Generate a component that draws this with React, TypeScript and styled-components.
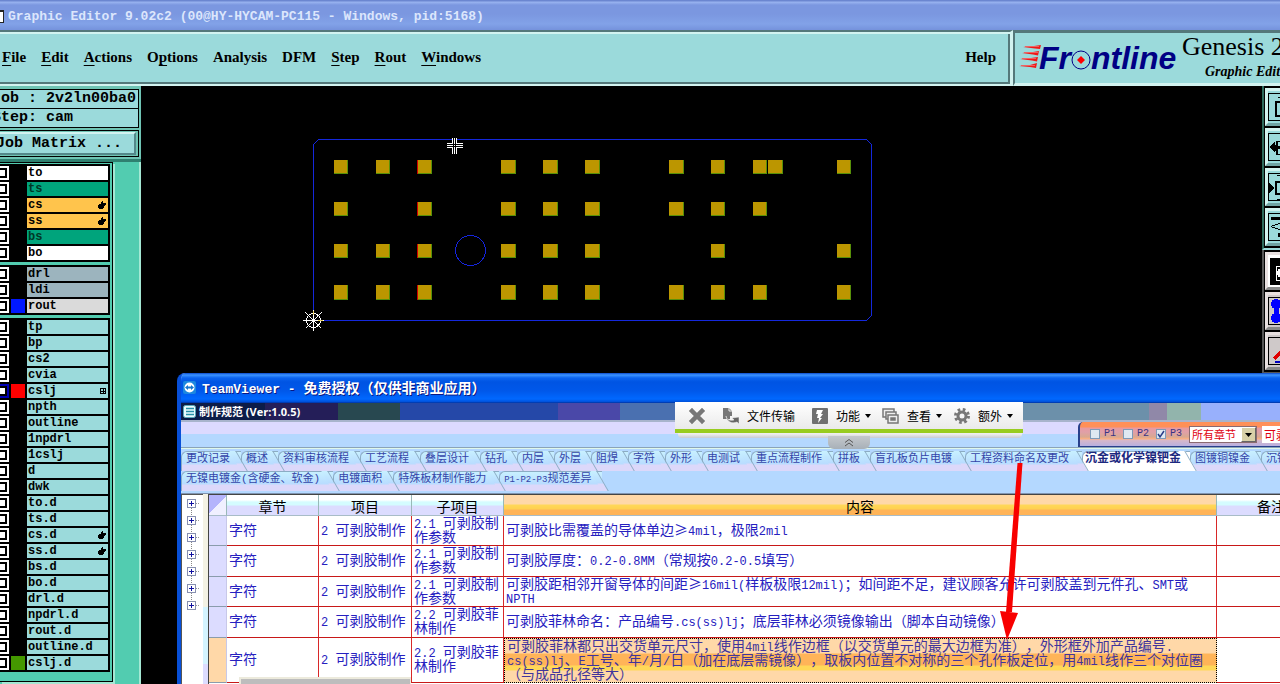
import React from 'react';
import styled, { createGlobalStyle, css } from 'styled-components';

const mono = '"Liberation Mono", "Noto Sans CJK SC", monospace';
const serif = '"Liberation Serif", "Noto Sans CJK SC", serif';
const cjk = '"Noto Sans CJK SC", sans-serif';
const aqua = '#9bdadb';
const teal = '#52ccb0';

const GlobalStyle = createGlobalStyle`
  *, *::before, *::after { box-sizing: border-box; }
  body { margin: 0; background: #000; overflow: hidden; }
  button, input, select { font: inherit; color: inherit; margin: 0; padding: 0; border-radius: 0; }
  button { background: none; border: 0; }
`;

const Screen = styled.div`
  position: relative;
  display: flex;
  flex-direction: column;
  height: 100vh;
  overflow: hidden;
  background: #000;
`;

/* ---------- title and menu ---------- */

const TitleBar = styled.header`
  display: flex;
  align-items: center;
  gap: 4px;
  height: 30px;
  flex: none;
  padding-top: 3px;
  background: linear-gradient(#6b86d0 0, #6b86d0 1px, #9ab4f0 2px, #7b97e0 5px, #7b97e0 14px, #82a2e8 24px, #7592dc 30px);
  color: #dce6fc;
  font: bold 13px/16px ${mono};
  white-space: pre;
`;

const TitleIcon = styled.span`
  width: 4px;
  height: 13px;
  background: #fff;
  border: solid #222;
  border-width: 2px 1px 1px 0;
`;

const TopRow = styled.div`
  display: flex;
  height: 56px;
  flex: none;
  background: ${aqua};
`;

const MenuBar = styled.nav`
  display: flex;
  align-items: center;
  gap: 15px;
  flex: 1;
  padding: 0 14px 2px 2px;
  border-top: 2px solid #54787a;
  border-bottom: 2px solid #d2f3f0;
  border-right: 3px solid #d2f3f0;
  box-shadow: inset 0 2px #d2f3f0, inset -2px -2px #54787a;
  font: bold 15px/20px ${serif};
  color: #000;
`;

const MenuItem = styled.button<{ $end?: boolean }>`
  white-space: nowrap;
  ${p => p.$end && css`margin-left: auto;`}
  u {
    text-decoration-thickness: 1px;
    text-underline-offset: 3px;
  }
`;

const Brand = styled.div`
  display: flex;
  width: 267px;
  flex: none;
  overflow: hidden;
  border-left: 2px solid #54787a;
  border-top: 3px solid #54787a;
  border-bottom: 3px solid #d2f3f0;
`;

const Logo = styled.svg`
  width: 164px;
  height: 50px;
  flex: none;
  margin-left: 3px;
`;

const BrandText = styled.div`
  flex: none;
  padding-top: 1px;
  font-family: ${serif};
  color: #000;
  white-space: nowrap;
`;

const Product = styled.div`
  font-size: 26px;
  line-height: 26px;
`;

const ProductSub = styled.div`
  padding-left: 23px;
  font-size: 14px;
  line-height: 24px;
  font-weight: bold;
  font-style: italic;
`;

/* ---------- left sidebar ---------- */

const Workspace = styled.div`
  display: flex;
  flex: 1;
  min-height: 0;
`;

const Sidebar = styled.aside`
  display: flex;
  flex-direction: column;
  width: 141px;
  flex: none;
  overflow: hidden;
  background: ${teal};
  color: #000;
`;

const JobPanel = styled.div`
  flex: none;
  padding: 3px 2px 2px 0;
  background: #6fc4b4;
  border-bottom: 3px solid #2f8070;
  font: bold 15px/18px ${mono};
  white-space: pre;
`;

const JobField = styled.div`
  height: 20px;
  margin-bottom: -1px;
  text-indent: -8px;
  background: ${aqua};
  border: 1px solid #000;
  border-left: 0;
`;

const MatrixFrame = styled.div`
  margin-top: 3px;
  padding: 1px 2px 1px 0;
  border: 1px solid #000;
  border-left: 0;
`;

const MatrixButton = styled.button`
  display: block;
  width: 100%;
  height: 23px;
  text-align: left;
  text-indent: -4px;
  background: ${aqua};
  border: solid;
  border-width: 2px 2px 2px 0;
  border-color: #d2f3f0 #54888a #54888a;
`;

const LayerArea = styled.div`
  display: flex;
  flex: 1;
  min-height: 0;
  border-right: 2px solid #a4e8d4;
`;

const LayerFrame = styled.div`
  display: flex;
  flex-direction: column;
  gap: 3px;
  width: 113px;
  height: 520px;
  padding: 1px 2px 0 0;
  border: solid #000;
  border-width: 1px 1px 1px 0;
  box-shadow: 2px 2px #a4e8d4;
`;

const LayerGroup = styled.ul`
  display: flex;
  flex-direction: column;
  gap: 2px;
  margin: 0;
  padding: 2px 2px 2px 0;
  list-style: none;
  background: #000;
`;

const LayerRow = styled.li`
  display: flex;
  gap: 2px;
  height: 14px;
`;

const LayerCheck = styled.input<{ $work?: boolean }>`
  appearance: none;
  width: 14px;
  height: 14px;
  flex: none;
  margin-left: -5px;
  background: #fff;
  border: 2px solid ${p => (p.$work ? '#0000b4' : '#fff')};
  box-shadow: inset 0 0 0 2px #000;
`;

const Swatch = styled.span<{ $c?: string }>`
  width: 14px;
  flex: none;
  background: ${p => p.$c || '#000'};
`;

const LayerName = styled.label<{ $bg: string; $fg: string }>`
  display: flex;
  justify-content: space-between;
  align-items: center;
  flex: 1;
  padding: 0 2px 0 1px;
  background: ${p => p.$bg};
  color: ${p => p.$fg};
  font: bold 12px/14px ${mono};
`;

const Canvas = styled.main`
  flex: 1;
  min-width: 0;
  svg { display: block; width: 100%; height: 100%; }
`;

/* ---------- right tool rail ---------- */

const Rail = styled.aside`
  display: flex;
  flex-direction: column;
  width: 18px;
  flex: none;
  overflow: hidden;
`;

const RailGroup = styled.div<{ $gray?: boolean }>`
  display: flex;
  flex-direction: column;
  gap: 2px;
  padding: 2px 0 2px 1px;
  width: 44px;
  background: #000;
  border-left: 2px solid ${p => (p.$gray ? '#555' : '#2d6a5c')};
  border-bottom: 2px solid ${p => (p.$gray ? '#555' : aqua)};
`;

const RailButton = styled.button<{ $tone: 'aqua' | 'gray' | 'on' }>`
  width: 38px;
  height: 38px;
  flex: none;
  border: 3px solid;
  border-color: ${p => (p.$tone === 'aqua' ? '#d2f3f0 #54888a #6fa2a2 #d2f3f0' : '#e8e0e0 #777 #888 #e8e0e0')};
  background: ${p => (p.$tone === 'aqua' ? aqua : p.$tone === 'gray' ? '#cfc9c9' : '#fff')};
  svg { display: block; width: 32px; height: 32px; }
`;

/* ---------- TeamViewer window ---------- */

const Window = styled.section`
  position: absolute;
  left: 177px;
  top: 373px;
  right: 0;
  bottom: 0;
  display: flex;
  flex-direction: column;
  overflow: hidden;
  background: #b4d8ff;
  border-left: 4px solid #0850d8;
  border-radius: 8px 0 0 0;
`;

const WindowTitle = styled.header`
  display: flex;
  align-items: center;
  gap: 5px;
  height: 30px;
  flex: none;
  margin-left: -4px;
  padding-left: 6px;
  background: linear-gradient(#0a48c8 0, #3c94ff 2px, #0a62ee 5px, #0054e3 9px, #0058ea 18px, #0068ff 26px, #0050d8 29px, #002a90 30px);
  color: #fff;
  font: bold 13px/18px ${mono};
  text-shadow: 1px 1px #0a1883;
  white-space: pre;
`;

const TitleCjk = styled.span`
  font-family: ${cjk};
  font-size: 14px;
  text-spacing-trim: space-all;
`;

const Caption = styled.div`
  display: flex;
  align-items: center;
  gap: 3px;
  height: 17px;
  flex: none;
  padding-left: 2px;
  color: #fff;
  font: bold 11px/16px "Open Sans", ${cjk};
  background: linear-gradient(90deg, #0c1c48 0, #0c1c48 84px, #241e58 84px, #241e58 157px,
    #284850 157px, #284850 219px, #2548a8 219px, #2548a8 377px, #4a48a8 377px, #4a48a8 439px,
    #4a70b0 439px, #4a70b0 600px, #6c90aa 600px, #6c90aa 968px, #9088a8 968px, #9088a8 986px,
    #92b4ac 986px, #92b4ac 1020px, #98b0fc 1020px);
`;

const FilterBand = styled.div`
  display: flex;
  justify-content: flex-end;
  height: 28px;
  flex: none;
  border-top: 2px solid #a8b4cc;
  border-bottom: 1px solid #8aa4b8;
  background: linear-gradient(#dcdaff 12px, #b4d8ff 12px);
`;

const FilterGroup = styled.form`
  display: flex;
  align-items: center;
  width: 202px;
  flex: none;
  overflow: hidden;
  padding-left: 10px;
  border: solid #28408c;
  border-width: 0 0 1px 2px;
  border-radius: 5px 0 0 0;
  background: linear-gradient(#ff9058 5px, #e89aa0 6px, #e0a0a8 10px, #d8a890 15px, #ffb080 17px, #d8b8c8 18px, #b8b0e0);
`;

const FilterCheck = styled.input`
  appearance: none;
  width: 10px;
  height: 10px;
  flex: none;
  background: #dfe9f2;
  border: 1px solid #7d9ab8;
`;

const CheckPair = styled.label`
  display: flex;
  align-items: center;
  gap: 4px;
  width: 33px;
  flex: none;
  color: #3a3484;
  font: 10px/12px ${mono};
`;

const CheckBox = styled.span`
  display: flex;
  position: relative;
  svg {
    position: absolute;
    inset: 0;
    width: 10px;
    height: 10px;
    pointer-events: none;
  }
`;

const ChapterField = styled.span`
  display: flex;
  width: 68px;
  height: 17px;
  flex: none;
  background: #fff;
  border: 1px solid #8a6a70;
  color: #e00010;
  font: 11px/15px ${cjk};
  select {
    appearance: none;
    width: 51px;
    padding-left: 2px;
    border: 0;
    background: #fff;
    outline: 0;
  }
  svg {
    width: 15px;
    height: 15px;
    flex: none;
    background: #d8d0a8;
    border: 1px solid;
    border-color: #fff #666 #666 #fff;
  }
`;

const SearchInput = styled.input`
  width: 60px;
  height: 17px;
  flex: none;
  margin-left: 5px;
  padding-left: 1px;
  border: 1px solid #fff;
  background: #fff;
  color: #e00010;
  font: 12px/15px ${cjk};
`;

/* remote control bar laid over the caption */
const RemoteBar = styled.div`
  position: absolute;
  left: 494px;
  top: 29px;
  width: 348px;
`;

const RemoteTools = styled.div`
  display: flex;
  align-items: center;
  height: 31px;
  padding: 0 8px 0 13px;
  background: linear-gradient(#fff, #eaeaea);
  border-bottom: 4px solid #98cc20;
  color: #000;
  font: 12px/18px ${cjk};
`;

const RemoteShade = styled.div`
  height: 5px;
  margin: 0 1px 0 3px;
  background: linear-gradient(#eee 1px, #c8ccd4);
  border-radius: 0 0 4px 4px;
`;

const RemoteTool = styled.button<{ $gap: number }>`
  display: flex;
  align-items: center;
  gap: 7px;
  margin-right: ${p => p.$gap}px;
  white-space: nowrap;
  svg { flex: none; }
`;

const CaretIcon = styled.svg`
  width: 6px;
  height: 4px;
  margin-left: -2px;
`;

const PullTab = styled.button`
  display: flex;
  justify-content: center;
  align-items: center;
  width: 42px;
  height: 13px;
  margin: -2px auto 0 153px;
  background: linear-gradient(#c4c8cc, #a8b0b8);
  border-radius: 0 0 6px 6px;
`;

const TabRow = styled.div`
  display: flex;
  height: 20px;
  flex: none;
  overflow: hidden;
`;

const TabArea = styled.div`
  flex: none;
  height: 46px;
  padding-top: 2px;
  border-top: 1px solid #e0f8ec;
  border-bottom: 1px solid #8094b0;
`;

const tabFill = 'linear-gradient(#c8f0ff, #b8dcff 12px, #dcd8fa 13px)';
const tabEnd = { short: 10, medium: 11, long: 13 };

const Tab = styled.button<{ $size: keyof typeof tabEnd; $active?: boolean }>`
  position: relative;
  height: 20px;
  flex: none;
  padding: 0 ${p => tabEnd[p.$size]}px 5px 4px;
  border-top: 1px solid #8cacc4;
  border-left: 1px solid #8cacc4;
  border-radius: 6px 0 0 0;
  background: ${p => (p.$active ? '#fff' : tabFill)};
  color: #3444a8;
  font: 11px/14px "Liberation Mono", ${cjk};
  white-space: nowrap;
  ${p => p.$active && css`
    padding-left: 2px;
    padding-right: 9px;
    font-weight: bold;
    font-size: 12px;
    color: #1c2880;
  `}
  &::after {
    content: '';
    position: absolute;
    z-index: 1;
    top: -1px;
    right: -1px;
    width: 7px;
    height: 20px;
    background: ${p => (p.$active ? '#fff' : tabFill)};
    border-right: 1px solid #8cacc4;
    transform: skewX(30deg);
  }
`;

const LatinTab = styled.span`
  font-family: "Liberation Mono", monospace;
  font-size: 9px;
`;

const Body = styled.div`
  display: flex;
  flex: 1;
  min-height: 0;
`;

const Tree = styled.ul`
  width: 22px;
  flex: none;
  margin: 0;
  padding: 3px 0 0 5px;
  list-style: none;
  background: #fff;
  border-left: 1px solid #555;
  border-top: 1px solid #555;
`;

const TreeNode = styled.li`
  height: 17px;
  button { display: block; }
  svg { display: block; }
`;

const Splitter = styled.div`
  width: 5px;
  flex: none;
  background: linear-gradient(#f4f2e4 113px, #d4f4ff 113px, #d4f4ff 170px, #dcdcff 170px);
`;

const Sheet = styled.div`
  position: relative;
  flex: 1;
  min-width: 0;
  overflow: hidden;
  background: #fff;
  border-left: 1px solid #444;
  border-top: 1px solid #444;
`;

const Grid = styled.table`
  table-layout: fixed;
  width: calc(100% + 46px);
  border-collapse: separate;
  border-spacing: 0;
  color: #2620c0;
  font: 14px/14px ${cjk};
  text-spacing-trim: space-all;
`;

const HeadCell = styled.th<{ $hot?: boolean }>`
  height: 21px;
  padding: 1px 0 0;
  color: #000;
  font: 14px/18px ${cjk};
  border-right: 1px solid #9ab8b8;
  border-bottom: 1px solid #a8bcc8;
  background: ${p => (p.$hot
    ? 'linear-gradient(#ffd8a8 9px, #ffd858 10px, #ffd050 14px, #ffb458 15px)'
    : 'linear-gradient(#fff 5px, #d4fcff 7px, #d4fcff 10px, #dcdcff 11px)')};
`;

const Corner = styled(HeadCell)`
  padding: 0;
  background: linear-gradient(135deg, #b4b4fc 50%, #f0f0ff 50%);
`;

const RowHead = styled.th<{ $hot?: boolean }>`
  padding: 0;
  background: ${p => (p.$hot ? '#ffd8a8' : '#dcdcff')};
  border-bottom: 1px solid #8a9cac;
  border-right: 1px solid #c8c8e8;
`;

const Cell = styled.td<{ $selected?: boolean }>`
  padding: 0 0 0 2px;
  white-space: nowrap;
  vertical-align: middle;
  border-right: 1px solid #d82828;
  border-bottom: 1px solid #c81818;
  ${p => p.$selected && css`
    color: #40349c;
    border: 1px dotted #000;
    background: linear-gradient(#ffd8a8 14px, #ffb458 15px, #ffb458 26px, #ffd858 27px, #ffd858 31px, #ffd8a8 32px);
  `}
`;

const Row = styled.tr<{ $h: number }>`
  height: ${p => p.$h}px;
`;

const Line = styled.div`
  height: 14px;
  line-height: 10px;
`;

const Latin = styled.span`
  font-family: "Liberation Mono", monospace;
  font-size: 12px;
`;

const BottomScroll = styled.div`
  position: absolute;
  left: 30px;
  bottom: 0;
  width: 172px;
  height: 7px;
  background: #bdbdbd;
  border: solid #eceadc;
  border-width: 2px 1px 0 2px;
`;

const Arrow = styled.svg`
  position: absolute;
  left: 995px;
  top: 460px;
  width: 30px;
  height: 182px;
  pointer-events: none;
`;

/* ---------- data ---------- */

type Layer = { n: string; bg?: string; fg?: string; sw?: string; mark?: 'hand' | 'grid' };

const groups: Layer[][] = [
  [
    { n: 'to', bg: '#fff' }, { n: 'ts', bg: '#00a47c', fg: '#003826' },
    { n: 'cs', bg: '#ffc44c', mark: 'hand' }, { n: 'ss', bg: '#ffc44c', mark: 'hand' },
    { n: 'bs', bg: '#00a47c', fg: '#003826' }, { n: 'bo', bg: '#fff' },
  ],
  [
    { n: 'drl', bg: '#9cb4be' }, { n: 'ldi', bg: '#9cb4be' }, { n: 'rout', bg: '#dadada', sw: '#0018ff' },
  ],
  [
    { n: 'tp' }, { n: 'bp' }, { n: 'cs2' }, { n: 'cvia' }, { n: 'cslj', sw: '#f00', mark: 'grid' },
    { n: 'npth' }, { n: 'outline' }, { n: '1npdrl' }, { n: '1cslj' }, { n: 'd' }, { n: 'dwk' },
    { n: 'to.d' }, { n: 'ts.d' }, { n: 'cs.d', mark: 'hand' }, { n: 'ss.d', mark: 'hand' },
    { n: 'bs.d' }, { n: 'bo.d' }, { n: 'drl.d' }, { n: 'npdrl.d' }, { n: 'rout.d' },
    { n: 'outline.d' }, { n: 'cslj.d', sw: '#449800' },
  ],
];

const padRows: [number, number[]][] = [
  [160, [334, 376, 418, 501, 543, 585, 669, 711, 753, 768, 837]],
  [202, [334, 418, 501, 543, 585, 669, 711, 753]],
  [244, [334, 376, 418, 501, 543, 585, 711, 837]],
  [285, [334, 376, 418, 501, 543, 585, 669, 711, 753, 837]],
];

const narrowPads = [334, 376, 418, 711, 753, 837];

const tabs = ['更改记录', '概述', '资料审核流程', '工艺流程', '叠层设计', '钻孔', '内层', '外层', '阻焊', '字符',
  '外形', '电测试', '重点流程制作', '拼板', '盲孔板负片电镀', '工程资料命名及更改', '沉金或化学镍钯金', '图镀铜镍金', '沉镍'];

const tabSize = (label: string): keyof typeof tabEnd =>
  label.length < 3 ? 'short' : label.length < 7 ? 'medium' : 'long';

const rows = [
  { h: 30, sub: '2.1 可剥胶制\n作参数', text: '可剥胶比需覆盖的导体单边≥4mil，极限2mil' },
  { h: 31, sub: '2.1 可剥胶制\n作参数', text: '可剥胶厚度：0.2-0.8MM（常规按0.2-0.5填写）' },
  { h: 30, sub: '2.1 可剥胶制\n作参数', text: '可剥胶距相邻开窗导体的间距≥16mil(样板极限12mil)；如间距不足，建议顾客允许可剥胶盖到元件孔、SMT或\nNPTH' },
  { h: 31, sub: '2.2 可剥胶菲\n林制作', text: '可剥胶菲林命名：产品编号.cs(ss)lj；底层菲林必须镜像输出（脚本自动镜像）' },
  { h: 45, sub: '2.2 可剥胶菲\n林制作', selected: true, text: '可剥胶菲林都只出交货单元尺寸，使用4mil线作边框（以交货单元的最大边框为准），外形框外加产品编号.\ncs(ss)lj、E工号、年/月/日（加在底层需镜像），取板内位置不对称的三个孔作板定位，用4mil线作三个对位圈\n（与成品孔径等大）' },
];

/* Sets Latin runs in the half-width face beside full-width Chinese. */
function Mixed({ text }: { text: string }) {
  return (
    <>
      {text.split('\n').map((line, i) => (
        <Line key={i}>
          {line.split(/([\x20-\x7e]+)/).map((part, j) => (j % 2 ? <Latin key={j}>{part}</Latin> : part))}
        </Line>
      ))}
    </>
  );
}

function Mark({ kind }: { kind: 'hand' | 'grid' }) {
  return kind === 'hand' ? (
    <svg width="8" height="8" viewBox="0 0 8 8"><path d="M4 0h1v2h3v2H7v1H6v2H5v1H1V7H0V4h1V3h2V1h1z" fill="#000" /></svg>
  ) : (
    <svg width="6" height="6" viewBox="0 0 6 6" shapeRendering="crispEdges">
      <path d="M.5.5h5v5h-5zM3 0v6M0 3h6" fill="none" stroke="#000" />
    </svg>
  );
}

function Board() {
  return (
    <svg aria-label="board">
      <g transform="translate(-141 -86)" shapeRendering="crispEdges">
        <path d="M313.5 320.5V144.5L318.5 139.5H866.5L871.5 144.5V315.5L866.5 320.5Z" fill="none" stroke="#1428dc" />
        <circle cx="470.5" cy="250.5" r="15" fill="none" stroke="#1424dc" />
        {padRows.map(([y, xs]) => xs.map(x => {
          const w = narrowPads.includes(x) ? 14 : 15;
          const h = y === 285 ? 15 : 14;
          return (
            <g key={`${x}-${y}`}>
              {x === 418 && <rect x={417} y={y} width={1} height={h} fill="#d00000" />}
              <rect x={x} y={y} width={w} height={h} fill="#589008" />
              <rect x={x} y={y} width={w - 1} height={h - 1} fill="#bc9600" />
            </g>
          );
        }))}
        <path d="M452 138h5v16h-5zM447 143h16v5h-16z" fill="#fff" />
        <path d="M453 138h1v16h-1zM455 138h1v16h-1zM447 144h16v1h-16zM447 146h16v1h-16z" fill="#000" />
        <circle cx="313.5" cy="320.5" r="7" fill="none" stroke="#fff" />
        <path d="M303 320.5h21M313.5 310v21M305.5 312.5l16 16M321.5 312.5l-16 16" stroke="#fff" />
        <path d="M313.5 311v4M318 320.5h5" stroke="#e8d060" />
      </g>
    </svg>
  );
}

function RailIcon({ k }: { k: number }) {
  const frame = <path d="M2.5 2.5h30v27h-30z" fill="none" stroke="#000" />;
  return (
    <svg viewBox="2 0 32 32" shapeRendering="crispEdges">
      {k === 0 && <>{frame}<path d="M10 11h14v14H10z" fill="none" stroke="#000" strokeWidth="2" /><path d="M12 6.5h8" stroke="#000" /></>}
      {k === 1 && <>{frame}<path d="M4 16l5-6v4h1v-4h14v14H10v-4H9v2z" fill="#000" /><path d="M12 11h10v12H12z" fill={aqua} /><path d="M10 16h8" stroke="#000" strokeWidth="3" /></>}
      {k === 2 && <>{frame}<path d="M3 12l6 5-6 5z" fill="#000" /><path d="M10 11h14v12H10z" fill="none" stroke="#000" strokeWidth="2" /><path d="M11 4.5h10M11 28.5h10" stroke="#000" /></>}
      {k === 3 && <>{frame}<path d="M5 6h20v3H5zM12 22h12v4H12z" fill="#000" /><path d="M5 15.5l8-3h12M5 15.5l8 3h12" fill="none" stroke="#000" /></>}
      {k === 4 && <><path d="M4 3h30v27H4z" fill="#000" /><path d="M10 11h14v14H10z" fill="none" stroke="#fff" /><circle cx="16" cy="18" r="5" fill="#fff" /></>}
      {k === 5 && <>{frame}<circle cx="10" cy="9" r="5" fill="#00f" /><circle cx="10" cy="23" r="5" fill="#00f" /><path d="M8 9h5v15H8z" fill="#00f" /></>}
      {k === 6 && <>{frame}<path d="M8 24l12-12" stroke="#e00000" strokeWidth="3" /><path d="M9 27h12" stroke="#0000c0" strokeWidth="2" /></>}
    </svg>
  );
}

const Caret = () => <CaretIcon viewBox="0 0 6 4"><path d="M0 0h6L3 4z" fill="#000" /></CaretIcon>;

export default function App() {
  return (
    <Screen>
      <GlobalStyle />
      <TitleBar><TitleIcon />Graphic Editor 9.02c2 (00@HY-HYCAM-PC115 - Windows, pid:5168)</TitleBar>

      <TopRow>
        <MenuBar>
          <MenuItem><u>F</u>ile</MenuItem>
          <MenuItem><u>E</u>dit</MenuItem>
          <MenuItem><u>A</u>ctions</MenuItem>
          <MenuItem>O<u>p</u>tions</MenuItem>
          <MenuItem>Analysis</MenuItem>
          <MenuItem>DFM</MenuItem>
          <MenuItem><u>S</u>tep</MenuItem>
          <MenuItem><u>R</u>out</MenuItem>
          <MenuItem><u>W</u>indows</MenuItem>
          <MenuItem $end>Help</MenuItem>
        </MenuBar>
        <Brand>
          <Logo viewBox="0 0 164 50">
            <g fill="#f01818">
              <path d="M5 14L16 13 23 12 22 16 17 15.500zM4 20L15 19 21 18 20 22.500 15 21.500zM2 26L13 25 20 24 19 28.500 14 27.500zM1 33L12 32 19 30 18 35 12 34z" />
              <path d="M7 13.500h14M6 19.500h14M4 25.500h14M3 32.500h14" stroke="#f06060" strokeWidth="1" />
            </g>
            <g fill="#000084" fontFamily="Liberation Sans" fontWeight="bold" fontStyle="italic" fontSize="32">
              <text x="21" y="36">Fr</text>
              <text x="73" y="36">ntline</text>
            </g>
            <circle cx="63" cy="27" r="9" fill={aqua} stroke="#000084" strokeWidth="1" />
            <path d="M63 23l4 4-4 4-4-4z" fill="#f00" />
          </Logo>
          <BrandText>
            <Product>Genesis 2</Product>
            <ProductSub>Graphic Edit</ProductSub>
          </BrandText>
        </Brand>
      </TopRow>

      <Workspace>
        <Sidebar>
          <JobPanel>
            <JobField>Job : 2v2ln00ba0</JobField>
            <JobField>Step: cam</JobField>
            <MatrixFrame><MatrixButton>Job Matrix ...</MatrixButton></MatrixFrame>
          </JobPanel>
          <LayerArea>
            <LayerFrame>
              {groups.map((g, i) => (
                <LayerGroup key={i}>
                  {g.map(l => (
                    <LayerRow key={l.n}>
                      <LayerCheck type="checkbox" id={`layer-${l.n}`} $work={l.n === 'cslj'} />
                      <Swatch $c={l.sw} />
                      <LayerName htmlFor={`layer-${l.n}`} $bg={l.bg || aqua} $fg={l.fg || '#000'}>
                        {l.n}{l.mark && <Mark kind={l.mark} />}
                      </LayerName>
                    </LayerRow>
                  ))}
                </LayerGroup>
              ))}
            </LayerFrame>
          </LayerArea>
        </Sidebar>

        <Canvas><Board /></Canvas>

        <Rail>
          <RailGroup>
            {[0, 1, 2, 3].map(k => <RailButton key={k} $tone="aqua" aria-label={`view ${k + 1}`}><RailIcon k={k} /></RailButton>)}
          </RailGroup>
          <RailGroup $gray>
            {[4, 5, 6].map(k => <RailButton key={k} $tone={k === 4 ? 'on' : 'gray'} aria-label={`tool ${k - 3}`}><RailIcon k={k} /></RailButton>)}
          </RailGroup>
        </Rail>
      </Workspace>

      <Window>
        <WindowTitle>
          <svg width="14" height="16" viewBox="0 0 14 16">
            <rect x="0" y="1" width="13" height="13" rx="2" fill="#1c88e0" />
            <circle cx="6.500" cy="7.500" r="5" fill="#fff" />
            <path d="M2 7.500l3-2.500v1.500h3V5l3 2.500L8 10V8.500H5V10z" fill="#1878d0" />
          </svg>
          <span>TeamViewer - <TitleCjk>免费授权（仅供非商业应用）</TitleCjk></span>
        </WindowTitle>

        <Caption>
          <svg width="13" height="13" viewBox="0 0 13 13">
            <rect x=".5" y=".5" width="12" height="12" rx="2" fill="#e8fcff" stroke="#58a8b8" />
            <path d="M3 3.500h8M3 6.500h8M3 9.500h8" stroke="#2890a8" strokeWidth="1.500" />
          </svg>
          制作规范 (Ver:1.0.5)
        </Caption>

        <FilterBand>
          <FilterGroup>
            {['P1', 'P2', 'P3'].map(p => (
              <CheckPair key={p}>
                <CheckBox>
                  <FilterCheck type="checkbox" defaultChecked={p === 'P3'} />
                  {p === 'P3' && <svg viewBox="0 0 10 10"><path d="M2 5l2 3 4-6" fill="none" stroke="#283c88" strokeWidth="1.500" /></svg>}
                </CheckBox>
                {p}
              </CheckPair>
            ))}
            <ChapterField>
              <select aria-label="章节"><option>所有章节</option></select>
              <svg viewBox="0 0 13 13"><path d="M3 5h7L6.500 9z" fill="#000" /></svg>
            </ChapterField>
            <SearchInput aria-label="搜索" defaultValue="可剥" />
          </FilterGroup>
        </FilterBand>

        <TabArea>
          <TabRow>
            {tabs.map(t => <Tab key={t} $size={tabSize(t)} $active={t === '沉金或化学镍钯金'}>{t}</Tab>)}
          </TabRow>
          <TabRow>
            <Tab $size="long">无镍电镀金(含硬金、软金)</Tab>
            <Tab $size="medium">电镀面积</Tab>
            <Tab $size="long">特殊板材制作能力</Tab>
            <Tab $size="medium"><LatinTab>P1-P2-P3</LatinTab>规范差异</Tab>
          </TabRow>
        </TabArea>

        <Body>
          <Tree>
            {[1, 2, 3, 4, 5, 6, 7].map(n => (
              <TreeNode key={n}>
                <button aria-label={`expand ${n}`}>
                  <svg width="14" height="17" viewBox="0 0 14 17" shapeRendering="crispEdges">
                    {n < 7 && <path d="M4.500 10v7" stroke="#888" strokeDasharray="1 1" />}
                    <path d="M9 5.500h4" stroke="#999" strokeDasharray="1 1" />
                    <rect x=".5" y="1.500" width="8" height="8" fill="#fff" stroke="#8890b0" />
                    <path d="M2 5.500h5M4.500 3v5" stroke="#1010a0" />
                  </svg>
                </button>
              </TreeNode>
            ))}
          </Tree>
          <Splitter />
          <Sheet>
            <Grid>
              <colgroup>
                <col style={{ width: 18 }} /><col style={{ width: 92 }} /><col style={{ width: 93 }} />
                <col style={{ width: 92 }} /><col /><col style={{ width: 109 }} />
              </colgroup>
              <thead>
                <tr>
                  <Corner />
                  <HeadCell>章节</HeadCell>
                  <HeadCell>项目</HeadCell>
                  <HeadCell>子项目</HeadCell>
                  <HeadCell $hot>内容</HeadCell>
                  <HeadCell>备注</HeadCell>
                </tr>
              </thead>
              <tbody>
                {rows.map((r, i) => (
                  <Row key={i} $h={r.h}>
                    <RowHead $hot={r.selected} />
                    <Cell><Mixed text="字符" /></Cell>
                    <Cell><Mixed text="2 可剥胶制作" /></Cell>
                    <Cell><Mixed text={r.sub} /></Cell>
                    <Cell $selected={r.selected}><Mixed text={r.text} /></Cell>
                    <Cell />
                  </Row>
                ))}
              </tbody>
            </Grid>
            <BottomScroll />
          </Sheet>
        </Body>

        <RemoteBar>
          <RemoteTools>
            <RemoteTool $gap={16} aria-label="关闭">
              <svg width="18" height="18" viewBox="0 0 18 18"><path d="M4 4l10 10M14 4L4 14" stroke="#777" strokeWidth="4.500" strokeLinecap="square" /></svg>
            </RemoteTool>
            <RemoteTool $gap={16}>
              <svg width="18" height="18" viewBox="0 0 18 18">
                <path d="M1 1h6l3 3v5H8v3H1z" fill="#777" /><path d="M7 1v3h3" stroke="#eee" fill="none" />
                <path d="M4 9c1 4 4 5 8 4l-2-2 7-1v7l-2-2c-5 2-10 0-11-6z" fill="#666" stroke="#f4f4f4" strokeWidth=".5" />
              </svg>
              文件传输
            </RemoteTool>
            <RemoteTool $gap={11}>
              <svg width="18" height="18" viewBox="0 0 18 18">
                <rect x="1" y="1" width="16" height="16" rx="1" fill="#707070" />
                <path d="M6 3h6l-2 4h2L9 11h2l-4 5 1-5H6l1-4H5z" fill="#fff" />
              </svg>
              功能<Caret />
            </RemoteTool>
            <RemoteTool $gap={11}>
              <svg width="18" height="18" viewBox="0 0 18 18" fill="#eee" stroke="#777" strokeWidth="1.500">
                <path d="M1 2h11v8H1z" /><path d="M4 5h10v7H4z" /><path d="M6 8h10v8H6z" /><path d="M9 11h4v2H9z" fill="#777" />
              </svg>
              查看<Caret />
            </RemoteTool>
            <RemoteTool $gap={0}>
              <svg width="18" height="18" viewBox="0 0 18 18">
                <circle cx="9" cy="9" r="6.500" fill="none" stroke="#777" strokeWidth="3" strokeDasharray="2.600 2.505" />
                <circle cx="9" cy="9" r="4" fill="none" stroke="#777" strokeWidth="3" />
              </svg>
              额外<Caret />
            </RemoteTool>
          </RemoteTools>
          <RemoteShade />
          <PullTab aria-label="收起">
            <svg width="10" height="9" viewBox="0 0 10 9" fill="none" stroke="#555"><path d="M1 4.500l4-3 4 3M1 8l4-3 4 3" /></svg>
          </PullTab>
        </RemoteBar>
      </Window>

      <Arrow viewBox="0 0 30 182" fill="#f80000">
        <path d="M22.500 3h5L17 152h-6z" />
        <path d="M5 151l18 2-11 27z" />
      </Arrow>
    </Screen>
  );
}
